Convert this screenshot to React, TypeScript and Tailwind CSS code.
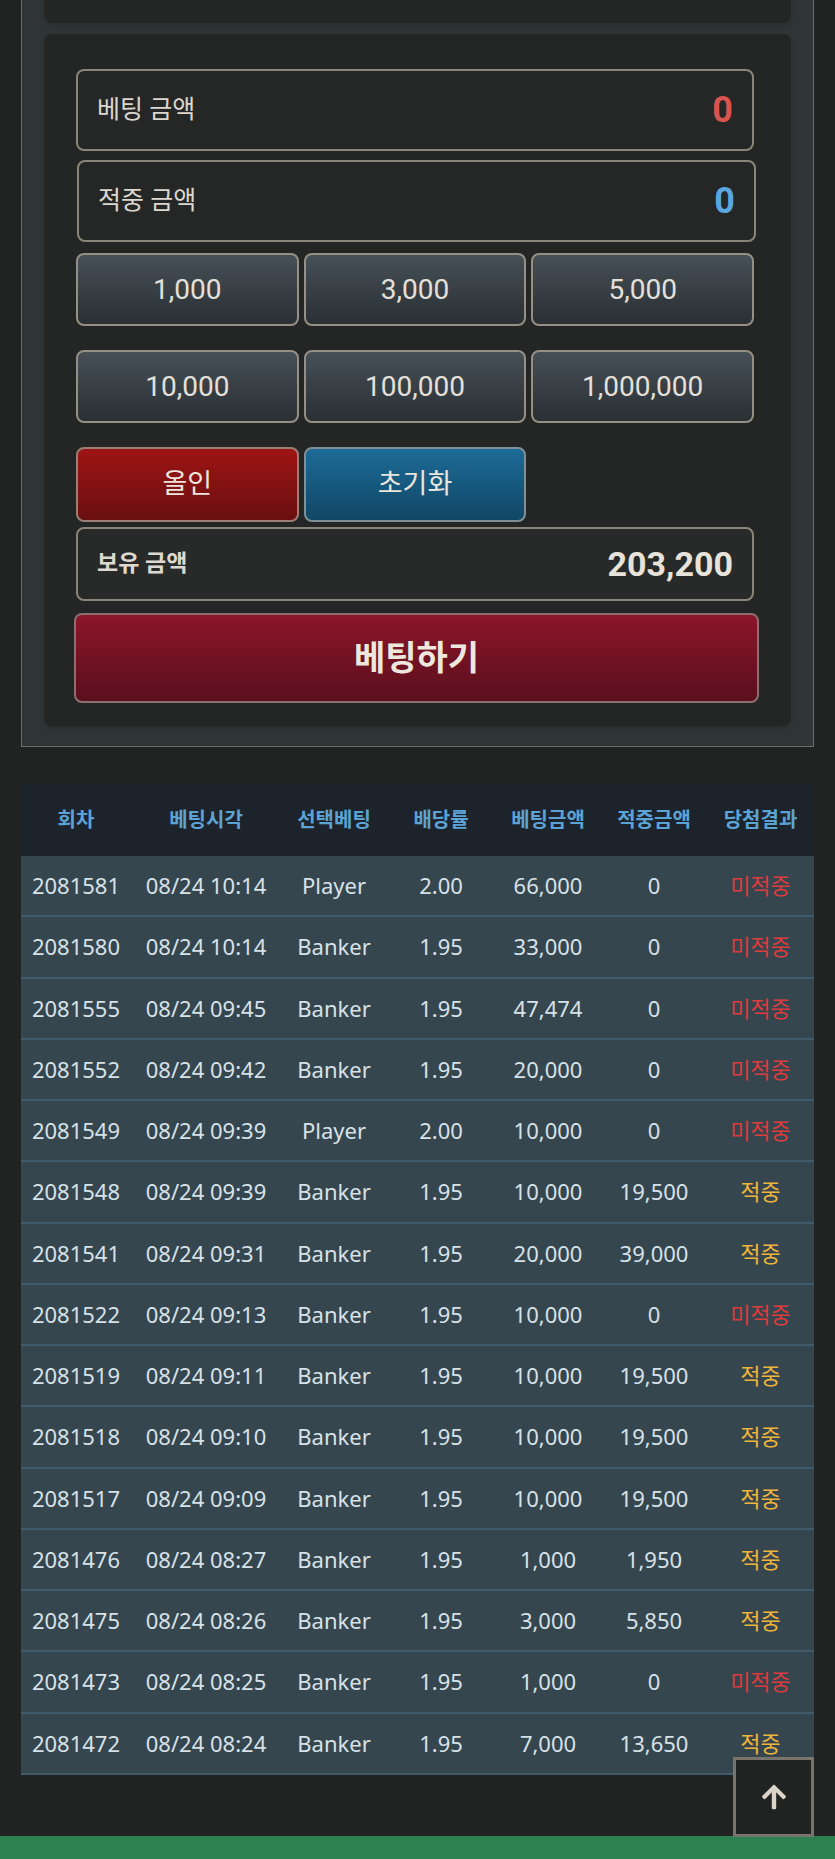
import { FaArrowUp } from 'react-icons/fa';

type Bet = {
  round: string;
  time: string;
  pick: string;
  odds: string;
  amount: string;
  win: string;
  hit: boolean;
};

const bets: Bet[] = [
  { round: '2081581', time: '08/24 10:14', pick: 'Player', odds: '2.00', amount: '66,000', win: '0', hit: false },
  { round: '2081580', time: '08/24 10:14', pick: 'Banker', odds: '1.95', amount: '33,000', win: '0', hit: false },
  { round: '2081555', time: '08/24 09:45', pick: 'Banker', odds: '1.95', amount: '47,474', win: '0', hit: false },
  { round: '2081552', time: '08/24 09:42', pick: 'Banker', odds: '1.95', amount: '20,000', win: '0', hit: false },
  { round: '2081549', time: '08/24 09:39', pick: 'Player', odds: '2.00', amount: '10,000', win: '0', hit: false },
  { round: '2081548', time: '08/24 09:39', pick: 'Banker', odds: '1.95', amount: '10,000', win: '19,500', hit: true },
  { round: '2081541', time: '08/24 09:31', pick: 'Banker', odds: '1.95', amount: '20,000', win: '39,000', hit: true },
  { round: '2081522', time: '08/24 09:13', pick: 'Banker', odds: '1.95', amount: '10,000', win: '0', hit: false },
  { round: '2081519', time: '08/24 09:11', pick: 'Banker', odds: '1.95', amount: '10,000', win: '19,500', hit: true },
  { round: '2081518', time: '08/24 09:10', pick: 'Banker', odds: '1.95', amount: '10,000', win: '19,500', hit: true },
  { round: '2081517', time: '08/24 09:09', pick: 'Banker', odds: '1.95', amount: '10,000', win: '19,500', hit: true },
  { round: '2081476', time: '08/24 08:27', pick: 'Banker', odds: '1.95', amount: '1,000', win: '1,950', hit: true },
  { round: '2081475', time: '08/24 08:26', pick: 'Banker', odds: '1.95', amount: '3,000', win: '5,850', hit: true },
  { round: '2081473', time: '08/24 08:25', pick: 'Banker', odds: '1.95', amount: '1,000', win: '0', hit: false },
  { round: '2081472', time: '08/24 08:24', pick: 'Banker', odds: '1.95', amount: '7,000', win: '13,650', hit: true },
];

const headers = ['회차', '베팅시각', '선택베팅', '배당률', '베팅금액', '적중금액', '당첨결과'];
const chips = ['1,000', '3,000', '5,000', '10,000', '100,000', '1,000,000'];

const gridCols = 'grid grid-cols-[110px_150px_106px_108px_106px_106px_1fr]';
const chipClass =
  'h-[73px] flex items-center justify-center rounded-lg border-2 border-[#958f84] bg-gradient-to-b from-[#465057] to-[#2a3034] text-[28px] text-[#e4e0d9]';

export default function App() {
  return (
    <div className="relative w-[835px] h-[1859px] bg-[#212322] overflow-hidden font-['Roboto','Noto_Sans_CJK_KR',sans-serif]">
      <section className="mx-[21px] border-x border-b border-[#6f6d65] bg-[#2f3537] px-[22px] pb-[20px]">
        <div className="h-[23px] rounded-b-lg bg-[#232625] shadow-md" />

        <div className="mt-[11px] rounded-lg bg-[#232625] pl-[32px] pr-[37px] pt-[35px] pb-[23px] shadow-md">
          <div className="h-[82px] flex items-center justify-between rounded-lg border-2 border-[#8a8578] bg-[#252726] px-[19px]">
            <span className="text-[25px] text-[#dcd7cf]">베팅 금액</span>
            <span className="text-[36px] font-bold text-[#d9534f]">0</span>
          </div>
          <div className="mt-[9px] ml-[1px] -mr-[2px] h-[82px] flex items-center justify-between rounded-lg border-2 border-[#8a8578] bg-[#252726] px-[19px]">
            <span className="text-[25px] text-[#dcd7cf]">적중 금액</span>
            <span className="text-[36px] font-bold text-[#5aa6e0]">0</span>
          </div>

          <div className="mt-[11px] grid grid-cols-3 gap-x-[5px] gap-y-[24px]">
            {chips.map((c) => (
              <button key={c} className={chipClass}>
                {c}
              </button>
            ))}
          </div>

          <div className="mt-[24px] grid grid-cols-3 gap-x-[5px]">
            <button className="h-[75px] flex items-center justify-center rounded-lg border-2 border-[#9c7f74] bg-gradient-to-b from-[#9e1414] to-[#6a0f10] text-[27px] text-[#ebe5dc]">
              올인
            </button>
            <button className="h-[75px] flex items-center justify-center rounded-lg border-2 border-[#7f8f97] bg-gradient-to-b from-[#1c6b97] to-[#114766] text-[27px] text-[#ebe5dc]">
              초기화
            </button>
          </div>

          <div className="mt-[5px] h-[74px] flex items-center justify-between rounded-lg border-2 border-[#8a8578] bg-[#282a29] px-[19px]">
            <span className="text-[23px] font-bold text-[#ddd8d0]">보유 금액</span>
            <span className="text-[34px] font-bold text-[#e8e3da]">203,200</span>
          </div>

          <button className="mt-[12px] -ml-[2px] w-[calc(100%+7px)] h-[90px] flex items-center justify-center rounded-lg border-2 border-[#8d6f6f] bg-gradient-to-b from-[#8c152a] to-[#5a0f1d] text-[34px] font-bold text-[#ede7de]">
            베팅하기
          </button>
        </div>
      </section>

      <div className="mx-[21px] mt-[36px] font-['Noto_Sans','Noto_Sans_CJK_KR',sans-serif]">
        <div className={`${gridCols} h-[73px] items-center bg-[#1d232a] text-center text-[20px] font-bold text-[#5ba3d5]`}>
          {headers.map((h) => (
            <div key={h}>{h}</div>
          ))}
        </div>
        {bets.map((b) => (
          <div
            key={b.round}
            className={`${gridCols} h-[61.25px] items-center border-b-2 border-[#3f5a6b] bg-[#36464f] text-center text-[22px] text-[#d7e2e8]`}
          >
            <div>{b.round}</div>
            <div>{b.time}</div>
            <div>{b.pick}</div>
            <div>{b.odds}</div>
            <div>{b.amount}</div>
            <div>{b.win}</div>
            <div className={b.hit ? 'text-[#eeb53a]' : 'text-[#dd3b3e]'}>{b.hit ? '적중' : '미적중'}</div>
          </div>
        ))}
      </div>

      <div className="absolute left-0 right-0 bottom-0 h-[23px] bg-[#2d8150]" />

      <button className="absolute left-[733px] top-[1757px] w-[81px] h-[80px] flex items-center justify-center border-[3px] border-[#7a756c] bg-[#212322]">
        <FaArrowUp className="h-[28px] w-[28px] text-[#d9d3c8]" />
      </button>
    </div>
  );
}
